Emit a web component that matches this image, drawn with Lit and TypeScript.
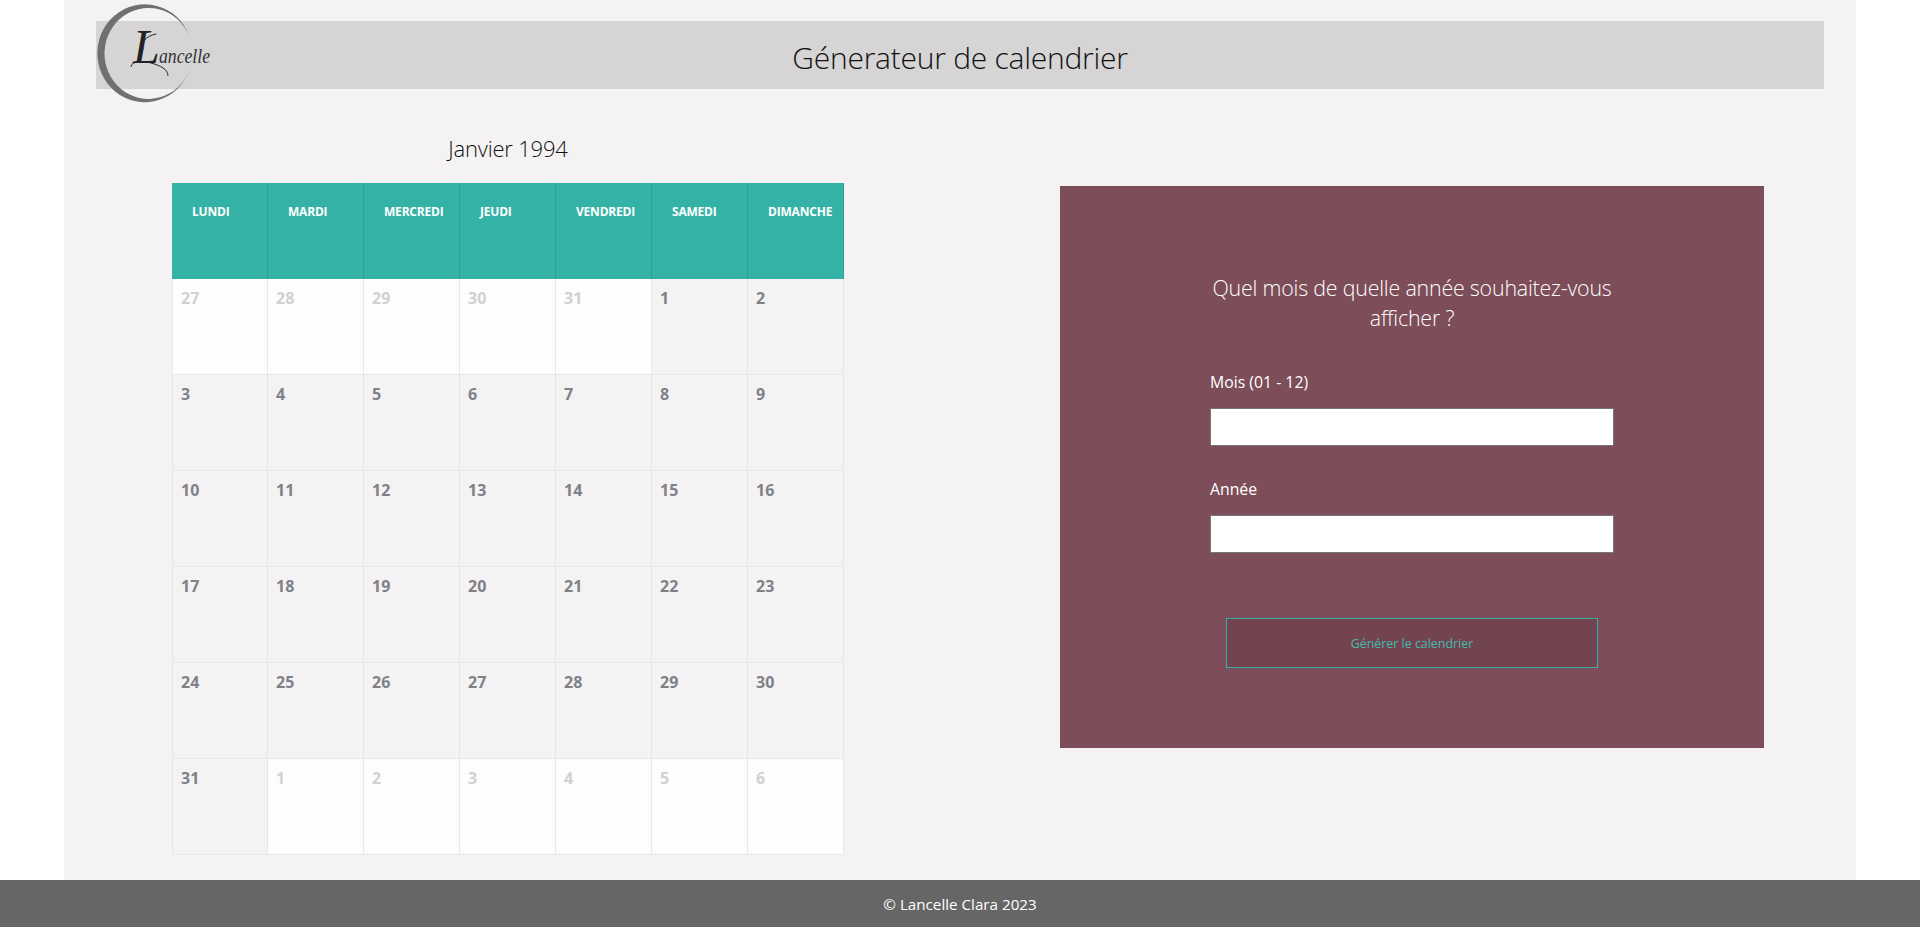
import { LitElement, html, css } from "lit";
import { customElement } from "lit/decorators.js";

const DAYS = ["Lundi", "Mardi", "Mercredi", "Jeudi", "Vendredi", "Samedi", "Dimanche"];

// janvier 1994: 5 jours de decembre avant le 1er, 6 jours de fevrier apres le 31
const before = [27, 28, 29, 30, 31].map((n) => ({ n, out: true }));
const month = Array.from({ length: 31 }, (_, i) => ({ n: i + 1, out: false }));
const after = [1, 2, 3, 4, 5, 6].map((n) => ({ n, out: true }));
const CELLS = [...before, ...month, ...after];

@customElement("app-root")
export class AppRoot extends LitElement {
  static styles = css`
    :host {
      display: block;
      background: #fff;
      font-family: "Open Sans", "Noto Sans", sans-serif;
      color: #111;
    }
    .page {
      margin: 0 64px;
      height: 880px;
      background: #f4f2f3;
      display: flex;
      flex-direction: column;
      overflow: hidden;
    }
    .banner {
      position: relative;
      margin: 21px 32px 0;
      height: 68px;
      background: #d6d4d5;
      display: flex;
      align-items: center;
      justify-content: center;
    }
    .banner h1 {
      margin: 4px 0 0;
      font-size: 30px;
      font-weight: 300;
      letter-spacing: -0.25px;
    }
    .logo {
      position: absolute;
      left: 0;
      top: -18px;
      width: 120px;
      height: 104px;
      overflow: visible;
    }
    .content {
      display: flex;
      padding: 41px 0 0 108px;
    }
    .calendar {
      width: 672px;
    }
    .calendar h2 {
      margin: 0 0 17px;
      height: 36px;
      line-height: 36px;
      text-align: center;
      font-size: 22px;
      font-weight: 300;
      letter-spacing: -0.2px;
    }
    .grid {
      display: grid;
      grid-template-columns: repeat(7, 96px);
      grid-auto-rows: 96px;
    }
    .head {
      background: #35b2a6;
      border-right: 1px solid #2aa196;
      box-sizing: border-box;
      padding: 19px 0 0 20px;
      color: #fff;
      font-size: 12px;
      line-height: 20px;
      font-weight: 700;
      text-transform: uppercase;
      letter-spacing: -0.2px;
      white-space: nowrap;
    }
    .cell {
      box-sizing: border-box;
      border-right: 1px solid #e6e8e8;
      border-bottom: 1px solid #e6e8e8;
      padding: 8px 0 0 8px;
      font-size: 16px;
      line-height: 22px;
      font-weight: 700;
      color: #7e8288;
    }
    .cell:nth-child(7n + 1) {
      border-left: 1px solid #e6e8e8;
    }
    .cell.out {
      background: #fdfdfd;
      color: #cfd1d4;
    }
    .panel {
      box-sizing: border-box;
      margin: 56px 0 0 216px;
      width: 704px;
      height: 562px;
      padding-top: 87px;
      background: #7d4d59;
      color: #fff;
      display: flex;
      flex-direction: column;
      align-items: center;
    }
    .panel h3 {
      margin: 0 0 37px;
      width: 404px;
      text-align: center;
      font-size: 21.4px;
      line-height: 30px;
      font-weight: 300;
      letter-spacing: -0.2px;
    }
    .field {
      width: 404px;
      display: flex;
      flex-direction: column;
      gap: 14px;
      margin-bottom: 31px;
    }
    .field label {
      font-size: 15.8px;
      line-height: 24px;
    }
    .field input {
      box-sizing: border-box;
      width: 100%;
      height: 38px;
      margin: 0;
      padding: 0;
      background: #fff;
      border: 1px solid #767676;
      border-radius: 0;
    }
    .panel button {
      box-sizing: border-box;
      margin-top: 34px;
      width: 372px;
      height: 50px;
      padding: 1px 0 0;
      background: #744350;
      border: 1px solid #35b2a6;
      border-radius: 0;
      color: #40bdaf;
      font-family: inherit;
      font-size: 12.4px;
    }
    footer {
      height: 47px;
      background: #666;
      color: #fff;
      font-size: 15.2px;
      display: flex;
      align-items: center;
      justify-content: center;
    }
  `;

  render() {
    return html`
      <div class="page">
        <header class="banner">
          <svg class="logo" viewBox="0 0 120 104">
            <path
              d="M94.9 38.2A47.5 49 0 1 0 93.6 66.7A44 45.5 0 1 1 94.9 38.2Z"
              fill="#707070"
            />
            <path
              d="M35 63.5C35 58 48 57.5 55 60C64 62.5 72 66 72 72.5M47 46C44 41 49 33 60 31"
              fill="none"
              stroke="#111"
              stroke-width="0.9"
              stroke-linecap="round"
            />
            <text
              x="37"
              y="60"
              font-family="Liberation Serif, serif"
              font-style="italic"
              font-size="48"
              fill="#222"
            >L</text>
            <text
              x="63"
              y="60"
              font-family="Liberation Serif, serif"
              font-style="italic"
              font-size="20"
              fill="#333"
              textLength="51"
              lengthAdjust="spacingAndGlyphs"
            >ancelle</text>
          </svg>
          <h1>Génerateur de calendrier</h1>
        </header>
        <div class="content">
          <section class="calendar">
            <h2>Janvier 1994</h2>
            <div class="grid">
              ${DAYS.map((d) => html`<div class="head">${d}</div>`)}
            </div>
            <div class="grid">
              ${CELLS.map(
                (c) => html`<div class="cell ${c.out ? "out" : ""}">${c.n}</div>`
              )}
            </div>
          </section>
          <form class="panel">
            <h3>Quel mois de quelle année souhaitez-vous afficher ?</h3>
            <div class="field">
              <label for="mois">Mois (01 - 12)</label>
              <input id="mois" type="text" />
            </div>
            <div class="field">
              <label for="annee">Année</label>
              <input id="annee" type="text" />
            </div>
            <button type="button">Générer le calendrier</button>
          </form>
        </div>
      </div>
      <footer>© Lancelle Clara 2023</footer>
    `;
  }
}
